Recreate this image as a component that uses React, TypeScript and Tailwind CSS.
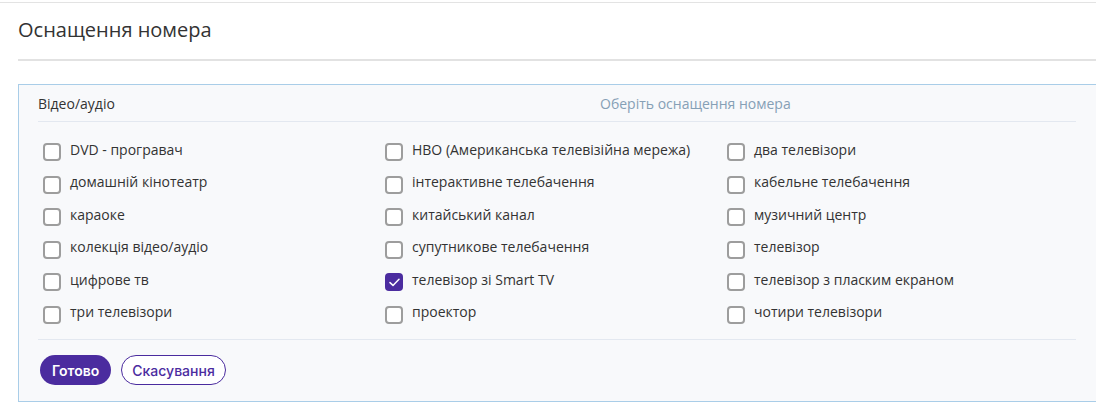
const columns: { label: string; checked?: boolean }[][] = [
  [
    { label: "DVD - програвач" },
    { label: "домашній кінотеатр" },
    { label: "караоке" },
    { label: "колекція відео/аудіо" },
    { label: "цифрове тв" },
    { label: "три телевізори" },
  ],
  [
    { label: "HBO (Американська телевізійна мережа)" },
    { label: "інтерактивне телебачення" },
    { label: "китайський канал" },
    { label: "супутникове телебачення" },
    { label: "телевізор зі Smart TV", checked: true },
    { label: "проектор" },
  ],
  [
    { label: "два телевізори" },
    { label: "кабельне телебачення" },
    { label: "музичний центр" },
    { label: "телевізор" },
    { label: "телевізор з пласким екраном" },
    { label: "чотири телевізори" },
  ],
];

function Check({ label, checked }: { label: string; checked?: boolean }) {
  return (
    <label className="flex h-[32.5px] items-center gap-[9px]">
      {checked ? (
        <span className="flex h-[18px] w-[18px] shrink-0 items-center justify-center rounded-[4px] bg-[#4b2c9f]">
          <svg width="11" height="9" viewBox="0 0 11 9" fill="none">
            <path d="M1 4.6L4 7.4L10 1.2" stroke="white" strokeWidth="1.5" strokeLinecap="round" strokeLinejoin="round" />
          </svg>
        </span>
      ) : (
        <span className="h-[18px] w-[18px] shrink-0 rounded-[4px] border-2 border-[#9d9d9d] bg-white" />
      )}
      <span className="-mt-[6px] text-[14px] text-[#333]">{label}</span>
    </label>
  );
}

export default function App() {
  return (
    <div className="w-[1096px] h-[402px] overflow-hidden bg-white font-['Open_Sans',sans-serif]">
      <div className="mt-[2px] border-t border-[#e3e3e3]" />
      <div className="pl-[18px]">
        <h2 className="flex h-[56px] items-center pb-[2px] text-[20px] text-[#333]">Оснащення номера</h2>
        <div className="border-t-2 border-[#e2e2e2]" />
        <div className="mt-[23px] h-[318px] border border-r-0 border-[#a9cde8] bg-[#f8f9fb] pl-[19px] pr-[20px]">
          <div className="flex h-[37px] items-center border-b border-[#e3e8f0]">
            <div className="w-[340px] text-[14px] text-[#333]">Відео/аудіо</div>
            <div className="flex-1 pl-[222px] text-[14px] text-[#86a0b6]">Оберіть оснащення номера</div>
          </div>
          <div className="grid grid-cols-[342px_342px_1fr] border-b border-[#e3e8f0] pl-[5px] pt-[14px] pb-[8px]">
            {columns.map((col, i) => (
              <div key={i} className="flex flex-col">
                {col.map((item) => (
                  <Check key={item.label} label={item.label} checked={item.checked} />
                ))}
              </div>
            ))}
          </div>
          <div className="flex gap-[10px] pt-[15px] pl-[2px] font-['Inter',sans-serif]">
            <button className="h-[30px] rounded-full bg-[#4b2c9f] px-[12px] text-[14px] font-semibold text-white">
              Готово
            </button>
            <button className="h-[30px] rounded-full border border-[#4b2c9f] bg-white px-[10px] text-[14px] font-medium text-[#4b2c9f]">
              Скасування
            </button>
          </div>
        </div>
      </div>
    </div>
  );
}
